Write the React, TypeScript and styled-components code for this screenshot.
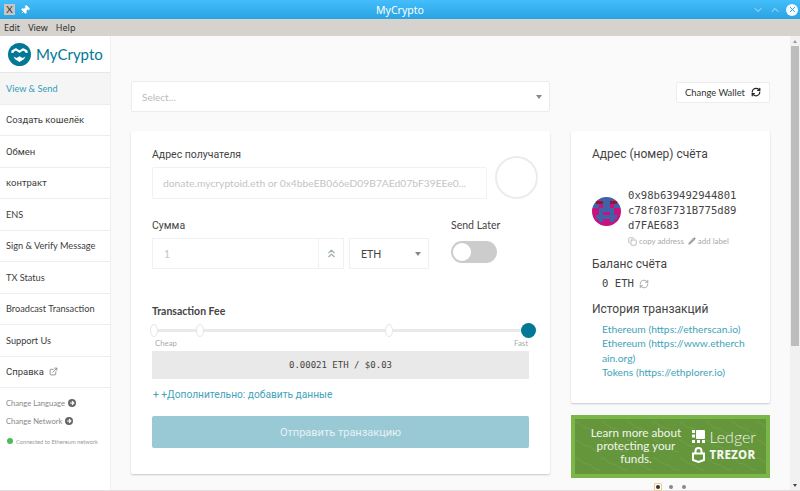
import styled, { createGlobalStyle } from "styled-components";
import {
  ChevronDown,
  ChevronUp,
  ChevronsUp,
  Copy,
  ExternalLink,
  Pencil,
  Pin,
  RefreshCw,
  X,
} from "lucide-react";

const GlobalStyle = createGlobalStyle`
  html, body {
    margin: 0;
    padding: 0;
    height: 100%;
    overflow: hidden;
  }
  body {
    font-family: Lato, "Noto Sans", sans-serif;
    color: #333;
  }
  * {
    box-sizing: border-box;
  }
`;

const navItems = [
  "View & Send",
  "Создать кошелёк",
  "Обмен",
  "контракт",
  "ENS",
  "Sign & Verify Message",
  "TX Status",
  "Broadcast Transaction",
  "Support Us",
];

const feeMarks = [-0.5, 11.7, 61.8];

const historyLinks = [
  "Ethereum (https://etherscan.io)",
  "Ethereum (https://www.etherchain.org)",
  "Tokens (https://ethplorer.io)",
];

const blockie = [
  "mmbbbbmm",
  "brrbbrrb",
  "bbmbbmbb",
  "mmbbbbmm",
  "mmbmmbmm",
  "mbbbbbbm",
  "mmbmmbmm",
  "mmmmmmmm",
];

const blockieColors: Record<string, string> = {
  m: "#c5127e",
  b: "#3f62a8",
  r: "#8c1c2c",
};

const App = () => {
  return (
    <Window>
      <GlobalStyle />
      <TitleBar>
        <TitleLeft>
          <AppBadge>X</AppBadge>
          <TiltedPin>
            <Pin size={10} fill="#fff" color="#fff" />
          </TiltedPin>
        </TitleLeft>
        <Title>MyCrypto</Title>
        <TitleRight>
          <ChevronDown size={12} strokeWidth={1.4} />
          <ChevronUp size={12} strokeWidth={1.4} />
          <CloseDot>
            <X size={9} color="#2b9fe0" strokeWidth={2.5} />
          </CloseDot>
        </TitleRight>
      </TitleBar>
      <MenuBar>
        <span>Edit</span>
        <span>View</span>
        <span>Help</span>
      </MenuBar>
      <Body>
        <Sidebar>
          <LogoRow>
            <svg width="23" height="23" viewBox="0 0 23 23">
              <circle cx="11.5" cy="11.5" r="11.5" fill="#007896" />
              <path
                d="M4.5 10V8.3L8 6.3l3.5 2.4L15 6.3l3.5 2V10"
                fill="none"
                stroke="#fff"
                strokeWidth="2.2"
                strokeLinejoin="round"
              />
              <path
                d="M5.5 13.5l3 1.6 3-1.8 3 1.8 3-1.6-1.6 2.8-4.4 2.6-4.4-2.6z"
                fill="#fff"
              />
            </svg>
            <LogoText>MyCrypto</LogoText>
          </LogoRow>
          {navItems.map((item, index) => (
            <NavItem key={item} $active={index === 0} $cyrillic={/[а-яё]/i.test(item)}>
              {item}
            </NavItem>
          ))}
          <NavItem $cyrillic>
            Справка
            <ExternalLink size={9} color="#777" />
          </NavItem>
          <SideFooter>
            <FooterLink>
              Change Language <MiniArrow />
            </FooterLink>
            <FooterLink>
              Change Network <MiniArrow />
            </FooterLink>
            <Connected>
              <GreenDot />
              Connected to Ethereum network
            </Connected>
          </SideFooter>
        </Sidebar>
        <Content>
          <TopRow>
            <WalletSelect>
              Select...
              <Caret />
            </WalletSelect>
            <ChangeWallet>
              Change Wallet
              <RefreshCw size={10} color="#222" strokeWidth={3} />
            </ChangeWallet>
          </TopRow>
          <Columns>
            <SendCard>
              <AddressRow>
                <AddressField>
                  <FieldLabel>Адрес получателя</FieldLabel>
                  <TextBox>donate.mycryptoid.eth or 0x4bbeEB066eD09B7AEd07bF39EEe0...</TextBox>
                </AddressField>
                <EmptyIdenticon />
              </AddressRow>
              <AmountRow>
                <AmountField>
                  <FieldLabel>Сумма</FieldLabel>
                  <AmountGroup>
                    <AmountBox>
                      <span>1</span>
                      <AmountAddon>
                        <ChevronsUp size={13} color="#9aa8a8" />
                      </AmountAddon>
                    </AmountBox>
                    <UnitSelect>
                      ETH
                      <Caret />
                    </UnitSelect>
                  </AmountGroup>
                </AmountField>
                <SendLater>
                  <SendLaterLabel>Send Later</SendLaterLabel>
                  <Toggle>
                    <ToggleKnob />
                  </Toggle>
                </SendLater>
              </AmountRow>
              <FeeLabel>Transaction Fee</FeeLabel>
              <Slider>
                {feeMarks.map((at) => (
                  <SliderMark key={at} $at={at} />
                ))}
                <SliderHandle />
              </Slider>
              <SliderEnds>
                <span>Cheap</span>
                <span>Fast</span>
              </SliderEnds>
              <FeeBox>0.00021 ETH / $0.03</FeeBox>
              <AdvancedLink>+ +Дополнительно: добавить данные</AdvancedLink>
              <SendButton>Отправить транзакцию</SendButton>
            </SendCard>
            <SideColumn>
              <InfoCard>
                <InfoTitle>Адрес (номер) счёта</InfoTitle>
                <AccountRow>
                  <Blockie viewBox="0 0 8 8" shapeRendering="crispEdges">
                    {blockie.map((row, y) =>
                      row
                        .split("")
                        .map((cell, x) => (
                          <rect
                            key={`${x}-${y}`}
                            x={x}
                            y={y}
                            width="1"
                            height="1"
                            fill={blockieColors[cell]}
                          />
                        )),
                    )}
                  </Blockie>
                  <AccountText>
                    <Address>0x98b639492944801 c78f03F731B775d89 d7FAE683</Address>
                    <AddressTools>
                      <Copy size={9} />
                      <span>copy address</span>
                      <Pencil size={8} fill="#999" />
                      <span>add label</span>
                    </AddressTools>
                  </AccountText>
                </AccountRow>
                <InfoHeading>Баланс счёта</InfoHeading>
                <Balance>
                  0 ETH
                  <RefreshCw size={10} color="#999" />
                </Balance>
                <InfoHeading>История транзакций</InfoHeading>
                <HistoryList>
                  {historyLinks.map((link) => (
                    <HistoryLink key={link}>{link}</HistoryLink>
                  ))}
                </HistoryList>
              </InfoCard>
              <Banner>
                <BannerWaves width="100%" height="100%">
                  <defs>
                    <pattern id="waves" width="26" height="18" patternUnits="userSpaceOnUse">
                      <path
                        d="M0 3q4 0 6 3t6 3 6 3 8 3"
                        fill="none"
                        stroke="#6f9f44"
                        strokeWidth="1"
                      />
                    </pattern>
                  </defs>
                  <rect width="100%" height="100%" fill="url(#waves)" />
                </BannerWaves>
                <BannerText>Learn more about protecting your funds.</BannerText>
                <BannerBrands>
                  <Brand>
                    <svg width="13" height="13" viewBox="0 0 13 13" fill="#fff">
                      <rect x="4" y="0" width="9" height="9" rx="1" />
                      <rect x="0" y="0" width="3" height="3" />
                      <rect x="0" y="4.5" width="3" height="3" />
                      <rect x="0" y="10" width="3" height="3" />
                      <rect x="5" y="10" width="3" height="3" />
                      <rect x="10" y="10" width="3" height="3" />
                    </svg>
                    <LedgerName>Ledger</LedgerName>
                  </Brand>
                  <Brand>
                    <svg width="13" height="16" viewBox="0 0 13 16" fill="none" stroke="#fff" strokeWidth="2">
                      <path d="M3.5 6V4a3 3 0 0 1 6 0v2" />
                      <path d="M1 6.5h11v6.5l-5.5 2L1 13z" />
                    </svg>
                    <TrezorName>TREZOR</TrezorName>
                  </Brand>
                </BannerBrands>
              </Banner>
              <Dots>
                <Dot $active />
                <Dot />
                <Dot />
              </Dots>
            </SideColumn>
          </Columns>
        </Content>
        <Scrollbar>
          <ScrollArrow $up />
          <ScrollThumb />
          <ScrollArrow />
        </Scrollbar>
      </Body>
    </Window>
  );
};

const MiniArrow = () => (
  <svg width="8" height="8" viewBox="0 0 8 8">
    <circle cx="4" cy="4" r="4" fill="#666" />
    <path d="M2 4h3.5M4 2.2L5.8 4 4 5.8" stroke="#fff" strokeWidth="1.2" fill="none" />
  </svg>
);

const Window = styled.div`
  width: 800px;
  height: 491px;
  display: flex;
  flex-direction: column;
  background: #fafafa;
  overflow: hidden;
`;

const TitleBar = styled.div`
  height: 19px;
  flex: none;
  display: flex;
  align-items: center;
  justify-content: space-between;
  position: relative;
  padding: 0 2px 0 4px;
  background: linear-gradient(#43bdfb, #2ba3e3);
  color: #fff;
`;

const TitleLeft = styled.div`
  display: flex;
  align-items: center;
  gap: 5px;
`;

const TiltedPin = styled.span`
  display: flex;
  transform: rotate(45deg);
`;

const AppBadge = styled.div`
  width: 11px;
  height: 11px;
  background: #c9c5c0;
  color: #333;
  font-size: 10px;
  line-height: 11px;
  text-align: center;
`;

const Title = styled.div`
  position: absolute;
  left: 0;
  right: 0;
  text-align: center;
  font-size: 10.5px;
  font-family: "Noto Sans", sans-serif;
`;

const TitleRight = styled.div`
  display: flex;
  align-items: center;
  gap: 5px;
  opacity: 0.95;
`;

const CloseDot = styled.div`
  width: 12px;
  height: 12px;
  border-radius: 50%;
  background: #fff;
  display: flex;
  align-items: center;
  justify-content: center;
`;

const MenuBar = styled.div`
  height: 17px;
  flex: none;
  display: flex;
  align-items: center;
  gap: 8px;
  padding: 0 4px;
  background: #d6d2ce;
  color: #333;
  font-family: "Noto Sans", sans-serif;
  font-size: 9px;
`;

const Body = styled.div`
  flex: 1;
  min-height: 0;
  display: flex;
  border-bottom: 1px solid #e4dede;
`;

const Sidebar = styled.nav`
  width: 111px;
  flex: none;
  background: #fff;
  border-right: 1px solid #f0f0f0;
`;

const LogoRow = styled.div`
  height: 37px;
  display: flex;
  align-items: center;
  gap: 5px;
  padding-left: 8px;
  border-bottom: 1px solid #e8e8e8;
`;

const LogoText = styled.div`
  color: #007896;
  font-size: 15px;
`;

const NavItem = styled.div<{ $active?: boolean; $cyrillic?: boolean }>`
  height: 31.5px;
  display: flex;
  align-items: center;
  gap: 5px;
  padding-left: 6px;
  font-family: ${(p) => (p.$cyrillic ? "Roboto, sans-serif" : "Lato, sans-serif")};
  font-size: ${(p) => (p.$cyrillic ? "9.5px" : "9.2px")};
  color: ${(p) => (p.$active ? "#2f9db5" : "#3c3c3c")};
  background: ${(p) => (p.$active ? "#f5f5f5" : "#fff")};
  border-bottom: 1px solid #eeeeee;
`;

const SideFooter = styled.div`
  padding: 6px 6px 0;
`;

const FooterLink = styled.div`
  display: flex;
  align-items: center;
  gap: 3px;
  height: 18.3px;
  font-size: 7.6px;
  color: #888;
`;

const Connected = styled.div`
  display: flex;
  align-items: center;
  gap: 3px;
  margin-top: 7px;
  padding-left: 1px;
  font-size: 5.7px;
  color: #999;
  white-space: nowrap;
`;

const GreenDot = styled.span`
  width: 6px;
  height: 6px;
  border-radius: 50%;
  background: #4cbb5c;
`;

const Content = styled.main`
  flex: 1;
  min-width: 0;
  padding: 45px 20px 0;
  background: #fafafa;
`;

const TopRow = styled.div`
  display: flex;
  align-items: flex-start;
  justify-content: space-between;
`;

const WalletSelect = styled.div`
  width: 419px;
  height: 31px;
  display: flex;
  align-items: center;
  justify-content: space-between;
  padding: 0 7px 0 10px;
  background: #fff;
  border: 1px solid #ececec;
  border-radius: 2px;
  color: #bbb;
  font-size: 10px;
`;

const Caret = styled.span`
  width: 0;
  height: 0;
  border-left: 3.5px solid transparent;
  border-right: 3.5px solid transparent;
  border-top: 4px solid #888;
`;

const ChangeWallet = styled.div`
  width: 94px;
  height: 21px;
  margin-top: 1px;
  padding-bottom: 1px;
  display: flex;
  align-items: center;
  justify-content: center;
  gap: 6px;
  background: #fff;
  border: 1px solid #ececec;
  border-radius: 2px;
  color: #333;
  font-size: 9.4px;
`;

const Columns = styled.div`
  display: flex;
  justify-content: space-between;
  margin-top: 19px;
`;

const SendCard = styled.section`
  width: 419px;
  height: 343px;
  padding: 17px 21px 0;
  background: #fff;
  border-radius: 2px;
  box-shadow: 0 1px 2px rgba(0, 0, 0, 0.2);
`;

const AddressRow = styled.div`
  display: flex;
  align-items: flex-end;
  gap: 8px;
`;

const AddressField = styled.div`
  width: 335px;
  flex: none;
`;

const FieldLabel = styled.div`
  font-family: Roboto, Lato, sans-serif;
  font-size: 10.5px;
  line-height: 13px;
  color: #444;
  margin-bottom: 6px;
`;

const SendLaterLabel = styled(FieldLabel)`
  font-family: Lato, sans-serif;
`;

const TextBox = styled.div`
  height: 32px;
  line-height: 30px;
  padding: 0 10px;
  border: 1px solid #eef2f5;
  border-radius: 2px;
  color: #c4c4c4;
  font-size: 10.3px;
  white-space: nowrap;
  overflow: hidden;
`;

const EmptyIdenticon = styled.div`
  width: 43px;
  height: 43px;
  flex: none;
  border-radius: 50%;
  border: 2px solid #ececec;
`;

const AmountRow = styled.div`
  display: flex;
  margin-top: 20px;
`;

const AmountField = styled.div`
  width: 277px;
`;

const AmountGroup = styled.div`
  display: flex;
  gap: 5px;
  height: 31px;
`;

const AmountBox = styled.div`
  width: 192px;
  display: flex;
  align-items: center;
  justify-content: space-between;
  padding-left: 11px;
  border: 1px solid #eef2f5;
  color: #c4c4c4;
  font-size: 10.5px;
`;

const AmountAddon = styled.div`
  width: 25px;
  height: 100%;
  display: flex;
  align-items: center;
  justify-content: center;
  border-left: 1px solid #eef2f5;
`;

const UnitSelect = styled.div`
  width: 80px;
  display: flex;
  align-items: center;
  justify-content: space-between;
  padding: 0 7px 0 11px;
  border: 1px solid #eef2f5;
  color: #444;
  font-size: 10.5px;
`;

const SendLater = styled.div`
  margin-left: 22px;
`;

const Toggle = styled.div`
  width: 46px;
  height: 22px;
  margin-top: 9px;
  padding: 2px;
  border-radius: 11px;
  background: #cccccc;
`;

const ToggleKnob = styled.div`
  width: 18px;
  height: 18px;
  border-radius: 50%;
  background: #fff;
`;

const FeeLabel = styled.div`
  margin-top: 36px;
  font-size: 10.5px;
  font-weight: 700;
  line-height: 13px;
  color: #444;
`;

const Slider = styled.div`
  position: relative;
  height: 3px;
  margin: 11px 0 0;
  background: #e9e9e9;
`;

const SliderMark = styled.div<{ $at: number }>`
  position: absolute;
  left: ${(p) => p.$at}%;
  top: -5px;
  width: 8px;
  height: 13px;
  border-radius: 50%;
  background: #fff;
  border: 1px solid #e6e6e6;
`;

const SliderHandle = styled.div`
  position: absolute;
  right: -7px;
  top: -6px;
  width: 15px;
  height: 15px;
  border-radius: 50%;
  background: #007896;
`;

const SliderEnds = styled.div`
  display: flex;
  justify-content: space-between;
  padding: 0 1px 0 3px;
  margin-top: 6px;
  font-size: 7.8px;
  line-height: 10px;
  color: #aaa;
`;

const FeeBox = styled.div`
  height: 28px;
  margin-top: 3px;
  display: flex;
  align-items: center;
  justify-content: center;
  background: #e9e9e9;
  font-family: "DejaVu Sans Mono", monospace;
  font-size: 9px;
  color: #444;
`;

const AdvancedLink = styled.div`
  margin-top: 9px;
  padding-left: 1px;
  font-family: Roboto, Lato, sans-serif;
  font-size: 10.2px;
  line-height: 14px;
  color: #3fa3ba;
`;

const SendButton = styled.div`
  height: 32px;
  margin-top: 14px;
  display: flex;
  align-items: center;
  justify-content: center;
  border-radius: 2px;
  background: #99c9d5;
  color: #e6f2f5;
  font-family: Roboto, Lato, sans-serif;
  font-size: 11px;
`;

const SideColumn = styled.div`
  width: 199px;
`;

const InfoCard = styled.section`
  height: 272px;
  padding: 16px 21px 0;
  background: #fff;
  border-radius: 2px;
  box-shadow: 0 1px 2px rgba(0, 0, 0, 0.2);
`;

const InfoTitle = styled.div`
  font-family: Roboto, Lato, sans-serif;
  font-size: 12px;
  line-height: 15px;
  color: #444;
`;

const AccountRow = styled.div`
  display: flex;
  align-items: flex-start;
  gap: 7px;
  margin: 26px 0 11px;
`;

const Blockie = styled.svg`
  width: 29px;
  height: 29px;
  flex: none;
  margin-top: 9px;
  border-radius: 50%;
`;

const AccountText = styled.div`
  width: 112px;
`;

const Address = styled.div`
  font-family: "DejaVu Sans Mono", monospace;
  font-size: 10.6px;
  line-height: 15px;
  color: #444;
  word-break: break-all;
`;

const AddressTools = styled.div`
  display: flex;
  align-items: center;
  gap: 2px;
  margin-top: 3px;
  font-size: 7.9px;
  color: #aaa;
  white-space: nowrap;

  span:first-of-type {
    margin-right: 2px;
  }
`;

const InfoHeading = styled.div`
  margin-top: 9px;
  font-family: Roboto, Lato, sans-serif;
  font-size: 12px;
  line-height: 15px;
  color: #444;
`;

const Balance = styled.div`
  display: flex;
  align-items: center;
  gap: 5px;
  margin: 4px 0 11px 10px;
  font-family: "DejaVu Sans Mono", monospace;
  font-size: 10.6px;
  line-height: 15px;
  color: #444;
`;

const HistoryList = styled.div`
  margin: 5px 0 0 10px;
`;

const HistoryLink = styled.div`
  font-size: 10.3px;
  line-height: 14.3px;
  color: #3fa3ba;
  word-break: break-all;
`;

const Banner = styled.div`
  height: 63px;
  margin-top: 12px;
  position: relative;
  display: flex;
  align-items: center;
  justify-content: space-between;
  padding: 0 10px 0 13px;
  border: 4px solid #7ab648;
  background: #65963c;
  color: #f1f5ec;
`;

const BannerWaves = styled.svg`
  position: absolute;
  inset: 0;
`;

const BannerText = styled.div`
  position: relative;
  width: 96px;
  margin-bottom: 2px;
  text-align: center;
  font-size: 11.7px;
  line-height: 13px;
`;

const BannerBrands = styled.div`
  position: relative;
  display: flex;
  flex-direction: column;
  gap: 2px;
  margin-bottom: 3px;
`;

const Brand = styled.div`
  display: flex;
  align-items: center;
  gap: 4px;
`;

const LedgerName = styled.span`
  font-size: 16px;
  font-weight: 300;
  line-height: 17px;
`;

const TrezorName = styled.span`
  font-family: "Noto Sans", sans-serif;
  font-size: 11.5px;
  font-weight: 800;
  letter-spacing: 0.3px;
`;

const Dots = styled.div`
  display: flex;
  justify-content: center;
  gap: 9px;
  margin-top: 7px;
`;

const Dot = styled.span<{ $active?: boolean }>`
  position: relative;
  width: 4px;
  height: 4px;
  border-radius: 50%;
  background: ${(p) => (p.$active ? "#333" : "#888")};

  ${(p) =>
    p.$active &&
    `&::after {
      content: "";
      position: absolute;
      inset: -2px;
      border: 1px solid #eecb98;
      border-radius: 1px;
    }`}
`;

const Scrollbar = styled.div`
  width: 10px;
  flex: none;
  display: flex;
  flex-direction: column;
  background: #f1f1f1;
`;

const ScrollArrow = styled.div<{ $up?: boolean }>`
  height: 10px;
  flex: none;
  display: flex;
  align-items: center;
  justify-content: center;

  &::before {
    content: "";
    border-left: 2.5px solid transparent;
    border-right: 2.5px solid transparent;
    ${(p) => (p.$up ? "border-bottom: 3px solid #999;" : "border-top: 3px solid #444;")}
  }
`;

const ScrollThumb = styled.div`
  height: 300px;
  margin: 0 1px auto;
  background: #bdbdbd;
`;

export default App;
